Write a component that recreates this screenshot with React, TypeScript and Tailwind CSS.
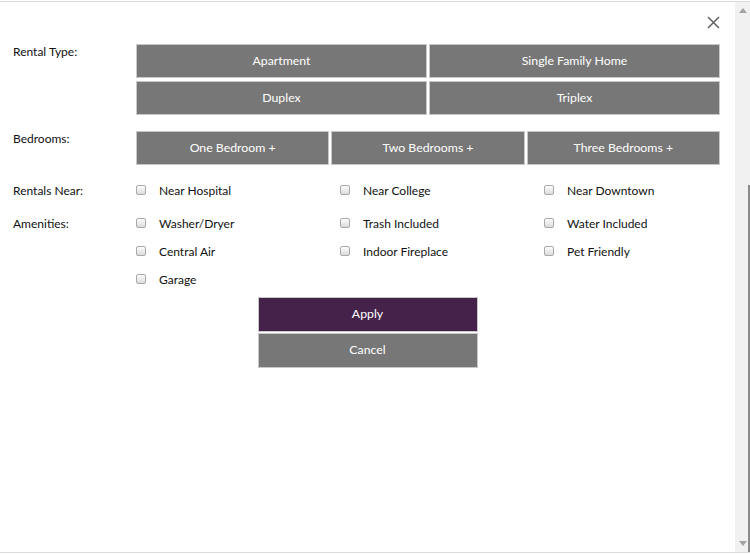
import React from "react";

const Btn = ({ children, className = "" }: { children: React.ReactNode; className?: string }) => (
  <div
    className={`h-[34px] flex items-center justify-center bg-[#777777] border border-[#c8c8c8] text-white text-[12.3px] ${className}`}
  >
    {children}
  </div>
);

const Check = ({ label }: { label: string }) => (
  <div className="w-[204px] h-[28px] flex items-center">
    <div className="w-[10px] h-[10px] rounded-[2px] border border-[#a9a9a9] bg-gradient-to-b from-[#fdfdfd] to-[#dcdcdc] -mt-[3px]" />
    <span className="ml-[13px] text-[12px] text-[#111]">{label}</span>
  </div>
);

export default function App() {
  return (
    <div
      className="w-[750px] h-[554px] bg-white flex flex-col overflow-hidden"
      style={{ fontFamily: "Lato, 'Open Sans', sans-serif" }}
    >
      <div className="h-[1px] bg-white" />
      <div className="flex-1 flex border-t border-b border-[#dcdcdc] min-h-0">
        <div className="flex-1 min-w-0 overflow-hidden relative pt-[42px]">
          <svg className="absolute left-[707px] top-[14px]" width="13" height="13" viewBox="0 0 13 13">
            <path d="M1 1 L12 12 M12 1 L1 12" stroke="#666" strokeWidth="1.6" />
          </svg>

          {/* Rental Type */}
          <div className="flex">
            <div className="w-[136px] shrink-0 pl-[13px] text-[12px] text-[#111] leading-[16px]">Rental Type:</div>
            <div className="w-[584px] shrink-0 grid grid-cols-2 gap-x-[2px] gap-y-[3px]">
              <Btn>Apartment</Btn>
              <Btn>Single Family Home</Btn>
              <Btn>Duplex</Btn>
              <Btn>Triplex</Btn>
            </div>
          </div>

          {/* Bedrooms */}
          <div className="flex mt-[16px]">
            <div className="w-[136px] shrink-0 pl-[13px] text-[12px] text-[#111] leading-[16px]">Bedrooms:</div>
            <div className="w-[584px] shrink-0 grid grid-cols-3 gap-x-[2px]">
              <Btn>One Bedroom +</Btn>
              <Btn>Two Bedrooms +</Btn>
              <Btn>Three Bedrooms +</Btn>
            </div>
          </div>

          {/* Rentals Near */}
          <div className="flex mt-[12px]">
            <div className="w-[136px] shrink-0 pl-[13px] h-[28px] flex items-center text-[12px] text-[#111]">Rentals Near:</div>
            <div className="flex">
              <Check label="Near Hospital" />
              <Check label="Near College" />
              <Check label="Near Downtown" />
            </div>
          </div>

          {/* Amenities */}
          <div className="flex mt-[5px]">
            <div className="w-[136px] shrink-0 pl-[13px] h-[28px] flex items-center text-[12px] text-[#111]">Amenities:</div>
            <div className="grid grid-cols-[204px_204px_180px]">
              <Check label="Washer/Dryer" />
              <Check label="Trash Included" />
              <Check label="Water Included" />
              <Check label="Central Air" />
              <Check label="Indoor Fireplace" />
              <Check label="Pet Friendly" />
              <Check label="Garage" />
            </div>
          </div>

          {/* Actions */}
          <div className="flex flex-col items-center mt-[3px]">
            <div className="w-[220px] h-[35px] flex items-center justify-center bg-[#45224a] border border-[#c8c8c8] text-white text-[12.3px]">
              Apply
            </div>
            <div className="w-[220px] h-[35px] mt-[1px] flex items-center justify-center bg-[#777777] border border-[#c8c8c8] text-white text-[12.3px]">
              Cancel
            </div>
          </div>
        </div>

        {/* Scrollbar */}
        <div className="w-[15px] shrink-0 bg-[#f1f1f1] flex flex-col justify-between items-center py-[6px] relative">
          <svg width="8" height="5" viewBox="0 0 8 5">
            <path d="M4 0 L8 5 L0 5 Z" fill="#a3a3a3" />
          </svg>
          <svg width="8" height="5" viewBox="0 0 8 5">
            <path d="M0 0 L8 0 L4 5 Z" fill="#a3a3a3" />
          </svg>
          <div className="absolute right-0 top-[183px] bottom-[0px] w-[2px] bg-[#8a8a8a]" />
        </div>
      </div>
      <div className="h-[1px] bg-white" />
    </div>
  );
}
